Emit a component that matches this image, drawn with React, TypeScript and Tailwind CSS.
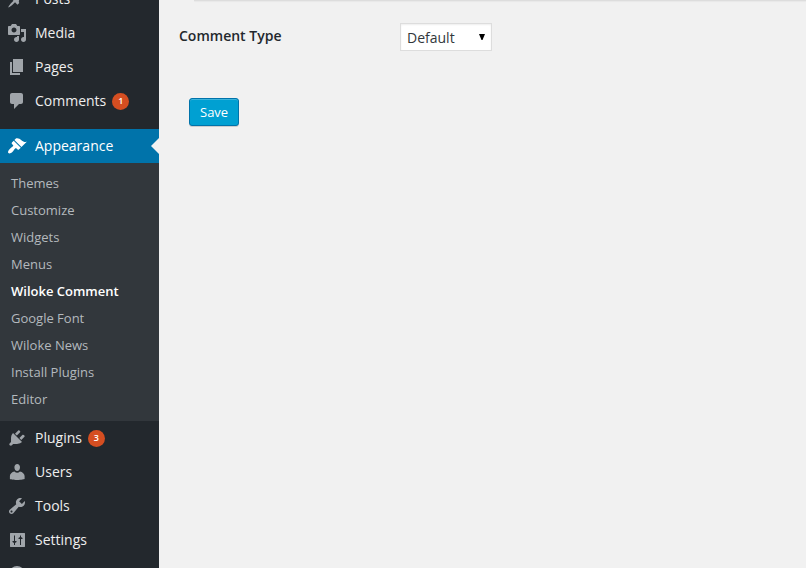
import React from "react";

const icons = {
  post: "M10.44 3.02l1.82-1.82 6.36 6.35-1.83 1.82c-1.05-.68-2.48-.57-3.41.36l-.75.75c-.92.93-1.04 2.35-.35 3.41l-1.83 1.82-2.41-2.41-2.8 2.79c-.42.42-3.38 2.71-3.8 2.29s1.86-3.39 2.28-3.81l2.79-2.79L4.1 9.36l1.83-1.82c1.05.69 2.48.57 3.4-.36l.75-.75c.93-.92 1.05-2.35.36-3.41z",
  media:
    "M13 11V4c0-.55-.45-1-1-1h-1.67L9 1H5L3.67 3H2c-.55 0-1 .45-1 1v7c0 .55.45 1 1 1h10c.55 0 1-.45 1-1zM7 4.5c1.38 0 2.5 1.12 2.5 2.5S8.38 9.5 7 9.5 4.5 8.38 4.5 7 5.62 4.5 7 4.5zM14 6h5v10.5c0 1.38-1.12 2.5-2.5 2.5S14 17.88 14 16.5s1.12-2.5 2.5-2.5c.17 0 .34.02.5.05V9h-3V6zm-4 8.05V13h2v3.5c0 1.38-1.12 2.5-2.5 2.5S7 17.88 7 16.5 8.12 14 9.5 14c.17 0 .34.02.5.05z",
  page: "M6 15V2h10v13H6zm-1 1h8v2H3V5h2v11z",
  comments:
    "M5 2h9c1.1 0 2 .9 2 2v7c0 1.1-.9 2-2 2h-2l-5 5v-5H5c-1.1 0-2-.9-2-2V4c0-1.1.9-2 2-2z",
  appearance:
    "M14.48 11.06L7.41 3.99l1.5-1.5c.5-.56 2.3-.47 3.51.32 1.21.8 1.43 1.28 2.91 2.1 1.18.64 2.45 1.26 4.45.85zm-.71.71L6.7 4.7 4.93 6.47c-.39.39-.39 1.02 0 1.41l1.06 1.06c.39.39.39 1.03 0 1.42-.6.6-1.43 1.11-2.21 1.69-.35.26-.7.53-1.01.84C1.43 14.23.4 16.08 1.4 17.07c.99 1 2.84-.03 4.18-1.36.31-.31.58-.66.85-1.02.57-.78 1.08-1.61 1.69-2.21.39-.39 1.02-.39 1.41 0l1.06 1.06c.39.39 1.02.39 1.41 0z",
  plugins:
    "M13.11 4.36L9.87 7.6 8 5.73l3.24-3.24c.35-.34 1.05-.2 1.56.32.52.51.66 1.21.31 1.55zm-8 1.77l.91-1.12 9.01 9.01-1.19.84c-.71.71-2.63 1.16-3.82 1.16H6.14L4.9 17.26c-.59.59-1.54.59-2.12 0-.59-.58-.59-1.53 0-2.12l1.24-1.24v-3.88c0-1.13.4-3.19 1.09-3.89zm7.26 3.97l3.24-3.24c.34-.35 1.04-.21 1.55.31.52.51.66 1.21.31 1.55l-3.24 3.25z",
  users:
    "M10.200 2c1.700 0 2.800 1.300 2.800 3.200s-1.200 3.900-2.800 3.900-2.800-2-2.800-3.900S8.500 2 10.200 2zM7.500 9.500c.8.8 1.600 1.200 2.700 1.200s1.900-.4 2.700-1.200c2.600.4 4.700 2.500 4.700 4.500v3s-3.400 1-7.400 1-7.300-1-7.300-1v-3c0-2 2-4.100 4.600-4.500z",
  tools:
    "M16.68 9.77c-1.34 1.34-3.3 1.67-4.95.99l-5.41 6.52c-.99.99-2.59.99-3.58 0s-.99-2.59 0-3.57l6.52-5.42c-.68-1.65-.35-3.61.99-4.95 1.28-1.28 3.12-1.62 4.72-1.06l-2.89 2.89 2.82 2.82 2.86-2.87c.53 1.58.18 3.39-1.08 4.65zM3.81 16.21c.4.39 1.04.39 1.43 0 .4-.4.4-1.04 0-1.43-.39-.4-1.03-.4-1.43 0-.39.39-.39 1.03 0 1.43z",
  settings:
    "M18 16.500V3.500c0-.3-.2-.5-.5-.5h-14c-.3 0-.5.2-.5.5v13c0 .3.2.5.5.5h14c.3 0 .5-.2.500-.5zM7 5.500h1V11h1.500v1L8 13v2H7v-2l-1.500-1v-1H7zM13 15V9h-1.500V8L13 7V5.500h1V7l1.500 1v1H14v6z",
  collapse:
    "M10 2a8 8 0 1 0 0 16 8 8 0 0 0 0-16zM12 6v8l-5-4 5-4z",
};

type IconName = keyof typeof icons;

function Icon({ name }: { name: IconName }) {
  return (
    <svg
      viewBox="0 0 20 20"
      className="size-5 shrink-0 fill-current"
      fillRule="evenodd"
      aria-hidden="true"
    >
      <path d={icons[name]} />
    </svg>
  );
}

function MenuItem({
  icon,
  label,
  count,
  active = false,
}: {
  icon: IconName;
  label: string;
  count?: number;
  active?: boolean;
}) {
  return (
    <li>
      <a
        href="#"
        className={
          active
            ? "relative flex h-[34px] items-center gap-2 bg-[#0073aa] pl-[7px] text-white"
            : "flex h-[34px] items-center gap-2 pl-[7px] text-[#eeeeee]"
        }
      >
        <span className={active ? "text-white" : "text-[#a0a5aa]"}>
          <Icon name={icon} />
        </span>
        <span>{label}</span>
        {count !== undefined && (
          <span className="-ml-0.5 flex size-[17px] items-center justify-center rounded-full bg-[#d54e21] text-[9px] font-semibold text-white">
            {count}
          </span>
        )}
        {active && (
          <span className="absolute right-0 top-[9px] border-8 border-l-0 border-transparent border-r-[#f1f1f1]" />
        )}
      </a>
    </li>
  );
}

const submenu = [
  "Themes",
  "Customize",
  "Widgets",
  "Menus",
  "Wiloke Comment",
  "Google Font",
  "Wiloke News",
  "Install Plugins",
  "Editor",
];

export default function App() {
  return (
    <div className="flex h-screen overflow-hidden bg-[#f1f1f1] font-['Open_Sans',sans-serif] text-sm">
      <nav className="w-[159px] shrink-0 overflow-hidden bg-[#23282d]">
        <ul className="-mt-[18px]">
          <MenuItem icon="post" label="Posts" />
          <MenuItem icon="media" label="Media" />
          <MenuItem icon="page" label="Pages" />
          <MenuItem icon="comments" label="Comments" count={1} />
          <li className="h-[11px]" aria-hidden="true" />
          <MenuItem icon="appearance" label="Appearance" active />
          <li>
            <ul className="bg-[#32373c] pb-2 pt-[7px] text-[13px]">
              {submenu.map((item) => (
                <li key={item}>
                  <a
                    href="#"
                    className={
                      item === "Wiloke Comment"
                        ? "flex h-[27px] items-center pl-[11px] font-semibold text-white"
                        : "flex h-[27px] items-center pl-[11px] text-[#b4b9be]"
                    }
                  >
                    {item}
                  </a>
                </li>
              ))}
            </ul>
          </li>
          <MenuItem icon="plugins" label="Plugins" count={3} />
          <MenuItem icon="users" label="Users" />
          <MenuItem icon="tools" label="Tools" />
          <MenuItem icon="settings" label="Settings" />
          <li>
            <button
              type="button"
              aria-label="Collapse menu"
              className="flex h-[34px] w-full items-center pl-[7px] text-[#a0a5aa]"
            >
              <Icon name="collapse" />
            </button>
          </li>
        </ul>
      </nav>

      <main className="min-w-0 flex-1 pl-5">
        <hr className="ml-[15px] border-t border-[#dddddd] shadow-[0_1px_1px_rgba(0,0,0,0.04)]" />
        <form onSubmit={(e) => e.preventDefault()}>
          <div className="flex items-start pt-[22px]">
            <label
              htmlFor="comment-type"
              className="w-[221px] shrink-0 pt-[3px] font-semibold text-[#23282d]"
            >
              Comment Type
            </label>
            <div className="relative">
              <select
                id="comment-type"
                defaultValue="Default"
                className="block h-7 w-[92px] appearance-none border border-[#dddddd] bg-white pl-1.5 pt-0.5 text-sm text-[#32373c] shadow-[inset_0_1px_2px_rgba(0,0,0,0.07)]"
              >
                <option>Default</option>
                <option>Facebook</option>
                <option>Disqus</option>
              </select>
              <svg
                viewBox="0 0 6 6"
                className="pointer-events-none absolute right-[7px] top-[11px] size-1.5 fill-black"
                aria-hidden="true"
              >
                <path d="M0 0h6L3.500 6h-1z" />
              </svg>
            </div>
          </div>
          <button
            type="submit"
            className="ml-2.5 mt-[47px] flex h-7 items-center rounded-[3px] border border-[#0073aa] bg-[#00a0d2] px-2.5 text-[13px] text-white shadow-[inset_0_1px_0_rgba(120,200,230,0.5),0_1px_0_rgba(0,0,0,0.15)]"
          >
            Save
          </button>
        </form>
      </main>
    </div>
  );
}
